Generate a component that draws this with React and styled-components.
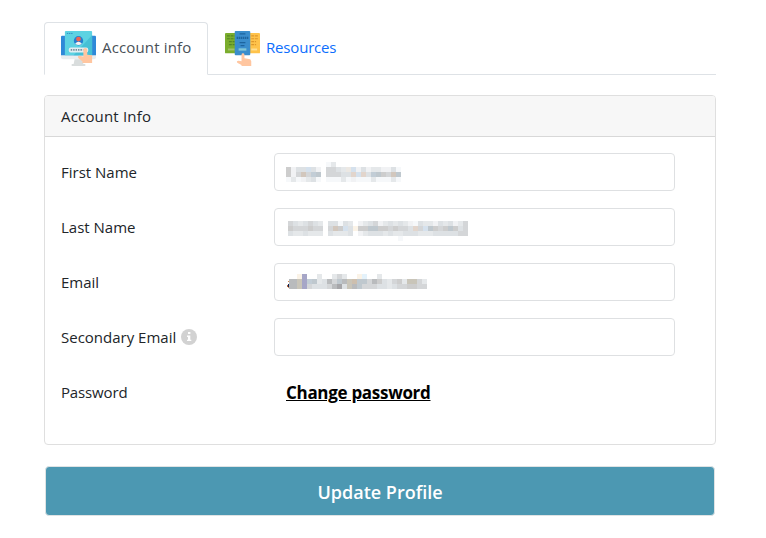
import React from 'react';
import styled, { createGlobalStyle } from 'styled-components';

const GlobalStyle = createGlobalStyle`
  * { box-sizing: border-box; }
  body {
    margin: 0;
    background: #fff;
    color: #212529;
    font: 400 15px/24px "Segoe UI", "Open Sans", "Noto Sans", sans-serif;
  }
`;

const Page = styled.main`
  width: 672px;
  margin-left: 44px;
  padding-top: 22px;
`;

const Tabs = styled.nav`
  display: flex;
  height: 53px;
  border-bottom: 1px solid #dee2e6;
`;

const Tab = styled.a`
  display: flex;
  align-items: flex-start;
  gap: 6px;
  width: ${(p) => (p.$active ? '164px' : '150px')};
  height: 53px;
  padding: 8px 16px 0;
  border: 1px solid ${(p) => (p.$active ? '#dee2e6' : 'transparent')};
  border-bottom-color: ${(p) => (p.$active ? '#fff' : 'transparent')};
  border-radius: 4px 4px 0 0;
  background: ${(p) => (p.$active ? '#fff' : 'transparent')};
  color: ${(p) => (p.$active ? '#495057' : '#0d6efd')};
`;

const TabIcon = styled.svg`
  flex: none;
  width: 35px;
  height: 35px;
`;

const Text = styled.span`
  white-space: nowrap;
  letter-spacing: ${(p) => p.$track || 0}px;
`;

const TabText = styled(Text)`
  padding-top: 4px;
`;

const Card = styled.section`
  height: 350px;
  margin-top: 20px;
  border: 1px solid #dfdfdf;
  border-radius: 4px;
  overflow: hidden;
`;

const CardHeader = styled.header`
  height: 41px;
  padding: 8px 16px;
  border-bottom: 1px solid #d8d8d8;
  background: #f7f7f7;
`;

const Form = styled.div`
  display: grid;
  gap: 17px;
  padding: 16px 40px 0 16px;
`;

const Row = styled.div`
  display: grid;
  grid-template-columns: 213px 401px;
  height: 38px;
  align-items: center;
`;

const Label = styled.label`
  display: flex;
  align-items: center;
  gap: 5px;
`;

const Field = styled.div`
  height: 38px;
  padding: ${(p) => p.$pad || '0'};
  border: 1px solid #dee0e2;
  border-radius: 4px;
  background: #fff;
`;

const Mosaic = styled.svg`
  display: block;
`;

const PasswordLink = styled.a`
  padding: 2px 0 0 12px;
  color: #000;
  font-size: 17px;
  font-weight: 700;
  text-decoration: underline;
  white-space: nowrap;
  letter-spacing: -0.3px;
`;

const UpdateButton = styled.button`
  display: block;
  width: 670px;
  height: 50px;
  margin: 21px 1px 0;
  padding: 2px 0 0;
  border: 1px solid #dfe3e4;
  border-radius: 4px;
  background: #4c98b2;
  color: #fff;
  font: 600 18px/24px "Segoe UI", "Open Sans", "Noto Sans", sans-serif;
`;

const AccountIcon = () => (
  <TabIcon viewBox="0 0 36 36">
    <path d="M0 6q0-1 1-1h34q1 0 1 1v20H0z" fill="#2f89d8" />
    <path d="M0 25h36v2q0 2-2 2H2q-2 0-2-2z" fill="#e9edef" />
    <path d="M14 29h8l1 5h2v2H11v-2h2z" fill="#d9dddd" />
    <path d="M4 1q0-1 1-1h26q1 0 1 1v24H4z" fill="#5dd2e2" />
    <path d="M32 4v21H13z" fill="#46c0d5" />
    <path d="M6 2.5h6" stroke="#318fc7" strokeDasharray="1.5 .7" />
    <circle cx="18" cy="10" r="4.8" fill="#2680d0" />
    <circle cx="18" cy="8.3" r="2.5" fill="#ef6353" />
    <path d="M14.5 13q3.5-4 7 0-3.5 3-7 0" fill="#f4f3f2" />
    <rect x="8" y="17" width="20" height="5" rx="2" fill="#e2eef2" />
    <path d="M10 19.5h13" stroke="#718f9e" strokeWidth="1.8" strokeDasharray="1.5 1" />
    <path d="M22 33v-2l-4-3q-1.5-2 1-2.5l4 1v-7q0-2 2-2t2 2v5l5 .5v8z" fill="#ffc6a0" />
  </TabIcon>
);

const ResourcesIcon = () => (
  <TabIcon viewBox="0 0 36 36">
    <rect y="2" width="13" height="21" rx="1" fill="#7bad2d" />
    <path d="M2 5h8M2 8h8M4 11h6M4 14h6" stroke="#558526" strokeWidth="1.2" strokeDasharray="3 .8" />
    <path d="M3 19h7" stroke="#a3c26a" strokeWidth="2" />
    <rect x="23" y="2" width="13" height="21" rx="1" fill="#ffc34b" />
    <path d="M27 5h7M27 8h7M27 11h5M27 14h5" stroke="#df982c" strokeWidth="1.2" strokeDasharray="3 .8" />
    <path d="M27 19h6" stroke="#ffdf92" strokeWidth="2" />
    <rect x="10" width="16" height="25" rx="1" fill="#3a8dcc" />
    <path d="M15 3h6M15 12h6M16 15h4" stroke="#1d659f" strokeWidth="1.4" />
    <path d="M12 7h12" stroke="#1d659f" strokeWidth="2.4" strokeDasharray="1.5 .6" />
    <path d="M14 19h8" stroke="#81c6d7" strokeWidth="2.4" />
    <path d="M17 36v-1l-4-2q-2-2 1-2.5l3 .5v-6.500q0-1.500 1.500-1.500T20 24.500V28l6 1 1 2v5z" fill="#ffc6a0" />
  </TabIcon>
);

const InfoIcon = () => (
  <svg width="16" height="16" viewBox="0 0 16 16">
    <circle cx="8" cy="8" r="8" fill="#d2d2d2" />
    <path d="M7 3h2.400v2H7zM6 6.500h3.300v4.200h1V12H6v-1.300h1V8H6z" fill="#fff" />
  </svg>
);

const tones = {
  a: '#bfc8ce', b: '#cdcdcd', c: '#d4d6d8', d: '#dde1e4', e: '#e5e8ea',
  f: '#ece8e3', g: '#f1f2f4', h: '#f6f8fa', i: '#a6a6a9', j: '#b9bbbd',
  k: '#a6a6c7', l: '#fbf3e7', m: '#e4f2fb', n: '#cdbfae', o: '#c9c5b9',
  6: '#d2c7bd', 7: '#c2cdd6', 8: '#d5e1ed', 9: '#e2d5cc',
};

const masks = {
  first: [
    '........he.............',
    'bgdd8dg.ccdef8gdgeeggdh',
    'bgc6c7a.cccdd989d7abc6a',
    'hehgedh.hhhehghhhehhheh',
  ],
  last: [
    'cdedcde.ddhde.gedcgededeghdeegdedgec',
    'bcccbcc.c6b8dlbbaabbcbccd9c8abcbabdc',
    'deedeee.deeed.gedddedeedddeeedddddcc',
    '......................h.............',
  ],
  email: [
    '..lk..e..ece..lm..e.........',
    '.jok7aedjcajonaacjbdecbeooce',
    '.jokcdddcjidojacccddedccbbcc',
  ],
};

const Redacted = ({ rows, children }) => (
  <Mosaic width={rows[0].length * 5} height={rows.length * 5} shapeRendering="crispEdges">
    {rows.flatMap((row, y) =>
      [...row].map((c, x) =>
        c === '.' ? null : <rect key={`${x}-${y}`} x={x * 5} y={y * 5} width="5" height="5" fill={tones[c]} />
      )
    )}
    {children}
  </Mosaic>
);

export default function App() {
  return (
    <>
      <GlobalStyle />
      <Page>
        <Tabs>
          <Tab $active><AccountIcon /><TabText $track={0.15}>Account info</TabText></Tab>
          <Tab><ResourcesIcon /><TabText $track={-0.18}>Resources</TabText></Tab>
        </Tabs>
        <Card>
          <CardHeader><Text $track={0.18}>Account Info</Text></CardHeader>
          <Form>
            <Row><Label><Text>First Name</Text></Label><Field $pad="8px 11px"><Redacted rows={masks.first} /></Field></Row>
            <Row><Label><Text>Last Name</Text></Label><Field $pad="12px 13px"><Redacted rows={masks.last} /></Field></Row>
            <Row>
              <Label><Text>Email</Text></Label>
              <Field $pad="10px 12px">
                <Redacted rows={masks.email}>
                  <path d="M2 5h3v10H2z" fill="#b9bbbd" />
                  <path d="M1 7h1v1H1zM1 13h1v1H1z" fill="#d88955" />
                  <path d="M0 11h1v2H0z" fill="#b66a3d" />
                  <path d="M1 10h1v3H1z" fill="#10204f" />
                </Redacted>
              </Field>
            </Row>
            <Row><Label><Text>Secondary Email</Text><InfoIcon /></Label><Field /></Row>
            <Row><Label><Text $track={-0.15}>Password</Text></Label><PasswordLink>Change password</PasswordLink></Row>
          </Form>
        </Card>
        <UpdateButton>Update Profile</UpdateButton>
      </Page>
    </>
  );
}
